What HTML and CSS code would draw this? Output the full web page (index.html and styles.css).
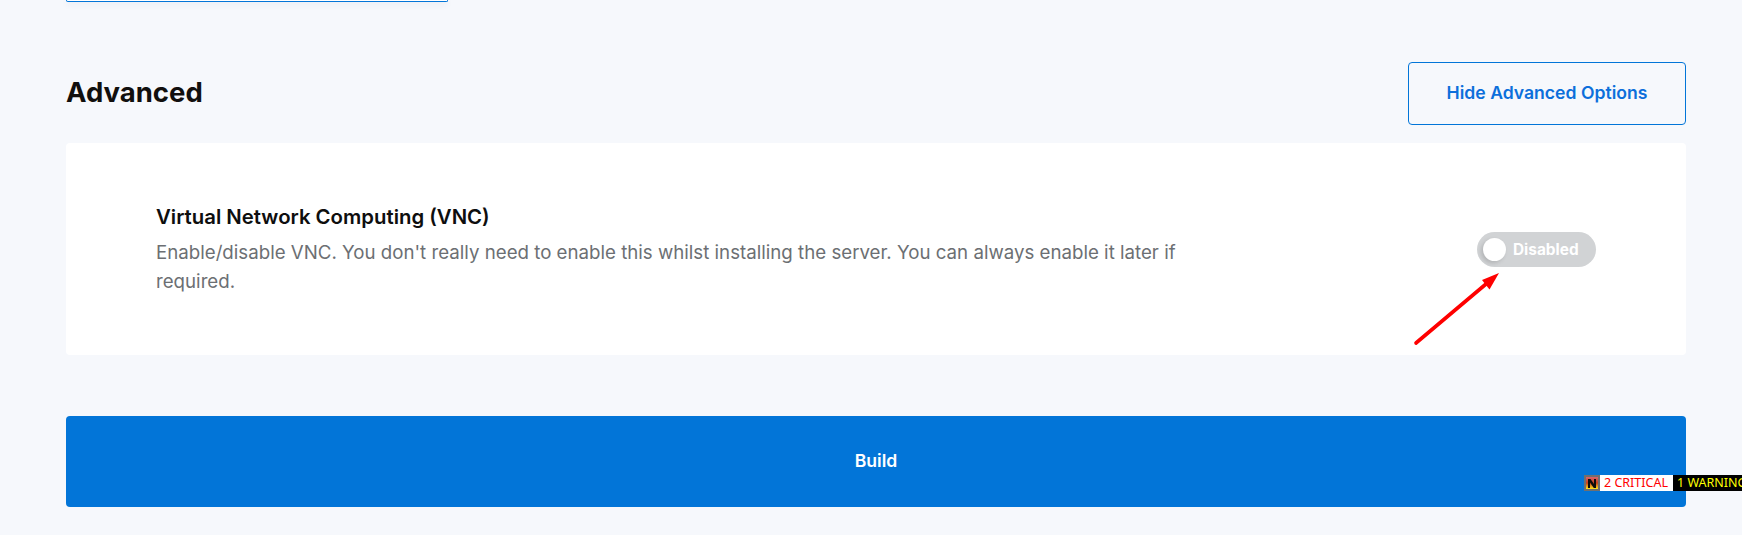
FILE: index.html
```html
<!DOCTYPE html>
<html lang="en">
<head>
<meta charset="utf-8">
<title>Advanced</title>
<link rel="stylesheet" href="styles.css">
</head>
<body>
<main class="page">
  <div class="stub"></div>
  <div class="section-head">
    <h2 class="section-title">Advanced</h2>
    <button class="outline-btn">Hide Advanced Options</button>
  </div>
  <section class="card">
    <div class="card-text">
      <h3 class="card-title">Virtual Network Computing (VNC)</h3>
      <p class="card-desc">Enable/disable VNC. You don't really need to enable this whilst installing the server. You can always enable it later if required.</p>
    </div>
    <div class="toggle"><span class="knob"></span><span class="toggle-label">Disabled</span></div>
  </section>
  <button class="build-btn">Build</button>
</main>
<svg class="arrow" width="100" height="90" viewBox="0 0 100 90">
  <line x1="6" y1="73" x2="76" y2="14" stroke="#fe0000" stroke-width="3.6" stroke-linecap="round"/>
  <polygon points="89,3 72,10 79.500,19.500" fill="#fe0000"/>
</svg>
<div class="status-badge">
  <svg class="status-icon" width="16" height="16" viewBox="0 0 16 16">
    <defs>
      <linearGradient id="flag" x1="0" y1="0" x2="0" y2="1">
        <stop offset="0" stop-color="#d8626a"/>
        <stop offset="0.5" stop-color="#c8401c"/>
        <stop offset="1" stop-color="#ffe81a"/>
      </linearGradient>
    </defs>
    <rect width="16" height="16" fill="#6f6f6f"/>
    <rect x="2" y="2" width="12" height="12" fill="url(#flag)"/>
    <path d="M4 13V4h2.500L10 9V4h2v9H9.800L6 7.500V13z" fill="#0c0c0c"/>
  </svg>
  <span class="status-critical">2 CRITICAL</span>
  <span class="status-warning">1 WARNING</span>
</div>
</body>
</html>
```

FILE: styles.css
```css
* { box-sizing: border-box; }
html, body { margin: 0; padding: 0; height: 535px; overflow: hidden; }
body { background: #f6f8fc; font-family: Inter, "Liberation Sans", sans-serif; color: #111; }
.page { padding: 0 56px 0 66px; }
.stub {
  width: 382px; height: 2px; background: #fff;
  border: 1px solid #0275d8; border-top: 0; border-radius: 0 0 3px 3px;
  box-shadow: 0 2px 6px rgba(30, 60, 110, .12);
}
.section-head { display: flex; align-items: center; justify-content: space-between; margin-top: 60px; height: 63px; }
.section-title { margin: 0 0 4px; font-size: 27.5px; line-height: 36px; font-weight: 700; color: #110f0e; }
.outline-btn {
  width: 278px; height: 63px; background: transparent;
  border: 1px solid #0275d8; border-radius: 4px; color: #0c6fdb;
  font: 600 17.6px/26px Inter, "Liberation Sans", sans-serif; padding: 0 0 2px;
}
.card {
  margin-top: 18px; height: 212px; background: #fff; border-radius: 4px;
  display: flex; align-items: center; justify-content: space-between;
  padding: 0 90px 0 90px;
}
.card-text { width: 1030px; }
.card-title { margin: 0 0 6px; font-size: 20.35px; line-height: 30px; font-weight: 600; color: #0e0e0e; }
.card-desc { margin: 0; font-size: 18.7px; line-height: 29px; font-weight: 400; color: #6c6f73; }
.toggle {
  width: 119px; height: 35px; border-radius: 18px; background: #d1d3d5;
  display: flex; align-items: center; padding-left: 6px;
}
.knob { width: 23px; height: 23px; border-radius: 50%; background: #fff; box-shadow: -2px 2px 4px rgba(0,0,0,.15); }
.toggle-label { margin-left: 7px; font-size: 15.4px; font-weight: 700; color: #fff; }
.build-btn {
  display: block; width: 100%; height: 91px; margin-top: 61px;
  background: #0275d8; border: 0; border-radius: 4px; color: #fff;
  font: 600 17.6px/26px Inter, "Liberation Sans", sans-serif; padding: 0 0 2px;
}
.arrow { position: absolute; left: 1410px; top: 270px; }
.status-badge {
  position: absolute; left: 1584px; top: 475px; width: 158px; height: 16px;
  display: flex; align-items: stretch; overflow: hidden;
  font: 12.5px/16px "Noto Sans", "Liberation Sans", sans-serif; white-space: nowrap;
}
.status-icon { flex: none; }
.status-critical { width: 73px; flex: none; background: #fff; color: #f00; padding-left: 4px; }
.status-warning { flex: 1; background: #000; color: #ff0; padding-left: 4px; }
```
